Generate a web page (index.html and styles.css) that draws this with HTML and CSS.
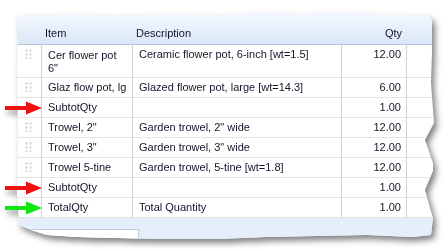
FILE: index.html
```html
<!DOCTYPE html>
<html>
<head>
<meta charset="utf-8">
<link rel="stylesheet" href="styles.css">
</head>
<body>
<div class="page">
  <div class="panel">
    <div class="grid">
      <div class="hd"></div>
      <div class="hd">Item</div>
      <div class="hd">Description</div>
      <div class="hd num">Qty</div>
      <div class="hd"></div>

      <div class="c handle"><span class="dots"></span></div>
      <div class="c tall">Cer flower pot 6"</div>
      <div class="c">Ceramic flower pot, 6-inch [wt=1.5]</div>
      <div class="c num">12.00</div>
      <div class="c fill"></div>

      <div class="c handle"><span class="dots"></span></div>
      <div class="c">Glaz flow pot, lg</div>
      <div class="c">Glazed flower pot, large [wt=14.3]</div>
      <div class="c num">6.00</div>
      <div class="c fill"></div>

      <div class="c handle"><span class="dots"></span></div>
      <div class="c">SubtotQty</div>
      <div class="c"></div>
      <div class="c num">1.00</div>
      <div class="c fill"></div>

      <div class="c handle"><span class="dots"></span></div>
      <div class="c">Trowel, 2"</div>
      <div class="c">Garden trowel, 2" wide</div>
      <div class="c num">12.00</div>
      <div class="c fill"></div>

      <div class="c handle"><span class="dots"></span></div>
      <div class="c">Trowel, 3"</div>
      <div class="c">Garden trowel, 3" wide</div>
      <div class="c num">12.00</div>
      <div class="c fill"></div>

      <div class="c handle"><span class="dots"></span></div>
      <div class="c">Trowel 5-tine</div>
      <div class="c">Garden trowel, 5-tine [wt=1.8]</div>
      <div class="c num">12.00</div>
      <div class="c fill"></div>

      <div class="c handle"><span class="dots"></span></div>
      <div class="c">SubtotQty</div>
      <div class="c"></div>
      <div class="c num">1.00</div>
      <div class="c fill"></div>

      <div class="c handle"><span class="dots"></span></div>
      <div class="c">TotalQty</div>
      <div class="c">Total Quantity</div>
      <div class="c num">1.00</div>
      <div class="c fill"></div>
    </div>
    <div class="footer">
      <div class="tab"><span class="tab-icon"></span></div>
    </div>
  </div>

  <svg class="arrow a1" width="38" height="14" viewBox="0 0 38 14"><rect x="0" y="5" width="24" height="4" fill="#ee1111"/><polygon points="21,0.5 37,7 21,13.5" fill="#ee1111"/></svg>
  <svg class="arrow a2" width="38" height="14" viewBox="0 0 38 14"><rect x="0" y="5" width="24" height="4" fill="#ee1111"/><polygon points="21,0.5 37,7 21,13.5" fill="#ee1111"/></svg>
  <svg class="arrow a3" width="38" height="14" viewBox="0 0 38 14"><rect x="0" y="5" width="24" height="4" fill="#11e611"/><polygon points="21,0.5 37,7 21,13.5" fill="#11e611"/></svg>
</div>
</body>
</html>
```
FILE: styles.css
```css
html, body {
  margin: 0;
  padding: 0;
  background: #ffffff;
}

.page {
  position: relative;
  width: 448px;
  height: 251px;
  padding: 13px 0 0 17px;
  box-sizing: border-box;
  filter: drop-shadow(3px 4px 3px rgba(0, 0, 0, 0.5));
}

.panel {
  width: 420px;
  height: 230px;
  background: #ffffff;
  font-family: "Liberation Sans", Arial, sans-serif;
  font-size: 11px;
  color: #15152a;
  clip-path: polygon(
    0px 3px, 30px 2px, 60px 1px, 90px 3px, 120px 2px, 160px 1px, 200px 2px,
    240px 0px, 280px 1px, 320px 0px, 360px 1px, 395px 2px, 412px 3px,
    415px 8px, 415px 40px, 414px 70px, 417px 110px, 408px 127px, 416px 150px,
    416px 158px, 408px 177px, 413px 195px, 416px 205px, 414px 222px,
    395px 224px, 350px 222px, 300px 223px, 250px 224px, 200px 226px,
    150px 226px, 100px 225px, 60px 224px, 30px 222px, 14px 217px,
    2px 212px, 0px 180px, 1px 120px, 0px 60px, 1px 20px
  );
}

.grid {
  display: grid;
  grid-template-columns: 25px 91px 209px 65px 1fr;
}

.hd {
  padding: 14px 4px 4px 3px;
  line-height: 13px;
  background: linear-gradient(#f3f8fe, #dbe7f7);
  border-bottom: 1px solid #b9c8da;
  white-space: nowrap;
}

.c {
  box-sizing: border-box;
  padding: 3px 4px 3px 6px;
  line-height: 13px;
  border-bottom: 1px solid #e4e4e4;
  border-right: 1px solid #d2d2d2;
  min-height: 20px;
}

.c.tall {
  padding-top: 4px;
  padding-bottom: 2px;
}

.c.fill {
  border-right: none;
}

.num {
  text-align: right;
  padding-right: 5px;
}

.handle {
  padding: 4px 0 0 8px;
}

.dots {
  display: block;
  width: 7px;
  height: 10px;
  background-image: radial-gradient(circle, #cfcfcf 0 1.2px, transparent 1.3px);
  background-size: 4px 4px;
  background-position: -0.5px -0.5px;
}

.footer {
  height: 25px;
  background: #e6eefb;
  padding: 11px 0 0 8px;
  box-sizing: border-box;
}

.tab {
  width: 114px;
  height: 20px;
  background: #ffffff;
  border: 1px solid #c3cfdf;
  border-bottom: none;
  box-sizing: border-box;
  padding: 3px 0 0 1px;
}

.tab-icon {
  display: block;
  width: 4px;
  height: 8px;
  background: #1e6aa0;
}

.arrow {
  position: absolute;
  left: 5px;
}

.a1 { top: 101px; }
.a2 { top: 181px; }
.a3 { top: 201px; }
```
